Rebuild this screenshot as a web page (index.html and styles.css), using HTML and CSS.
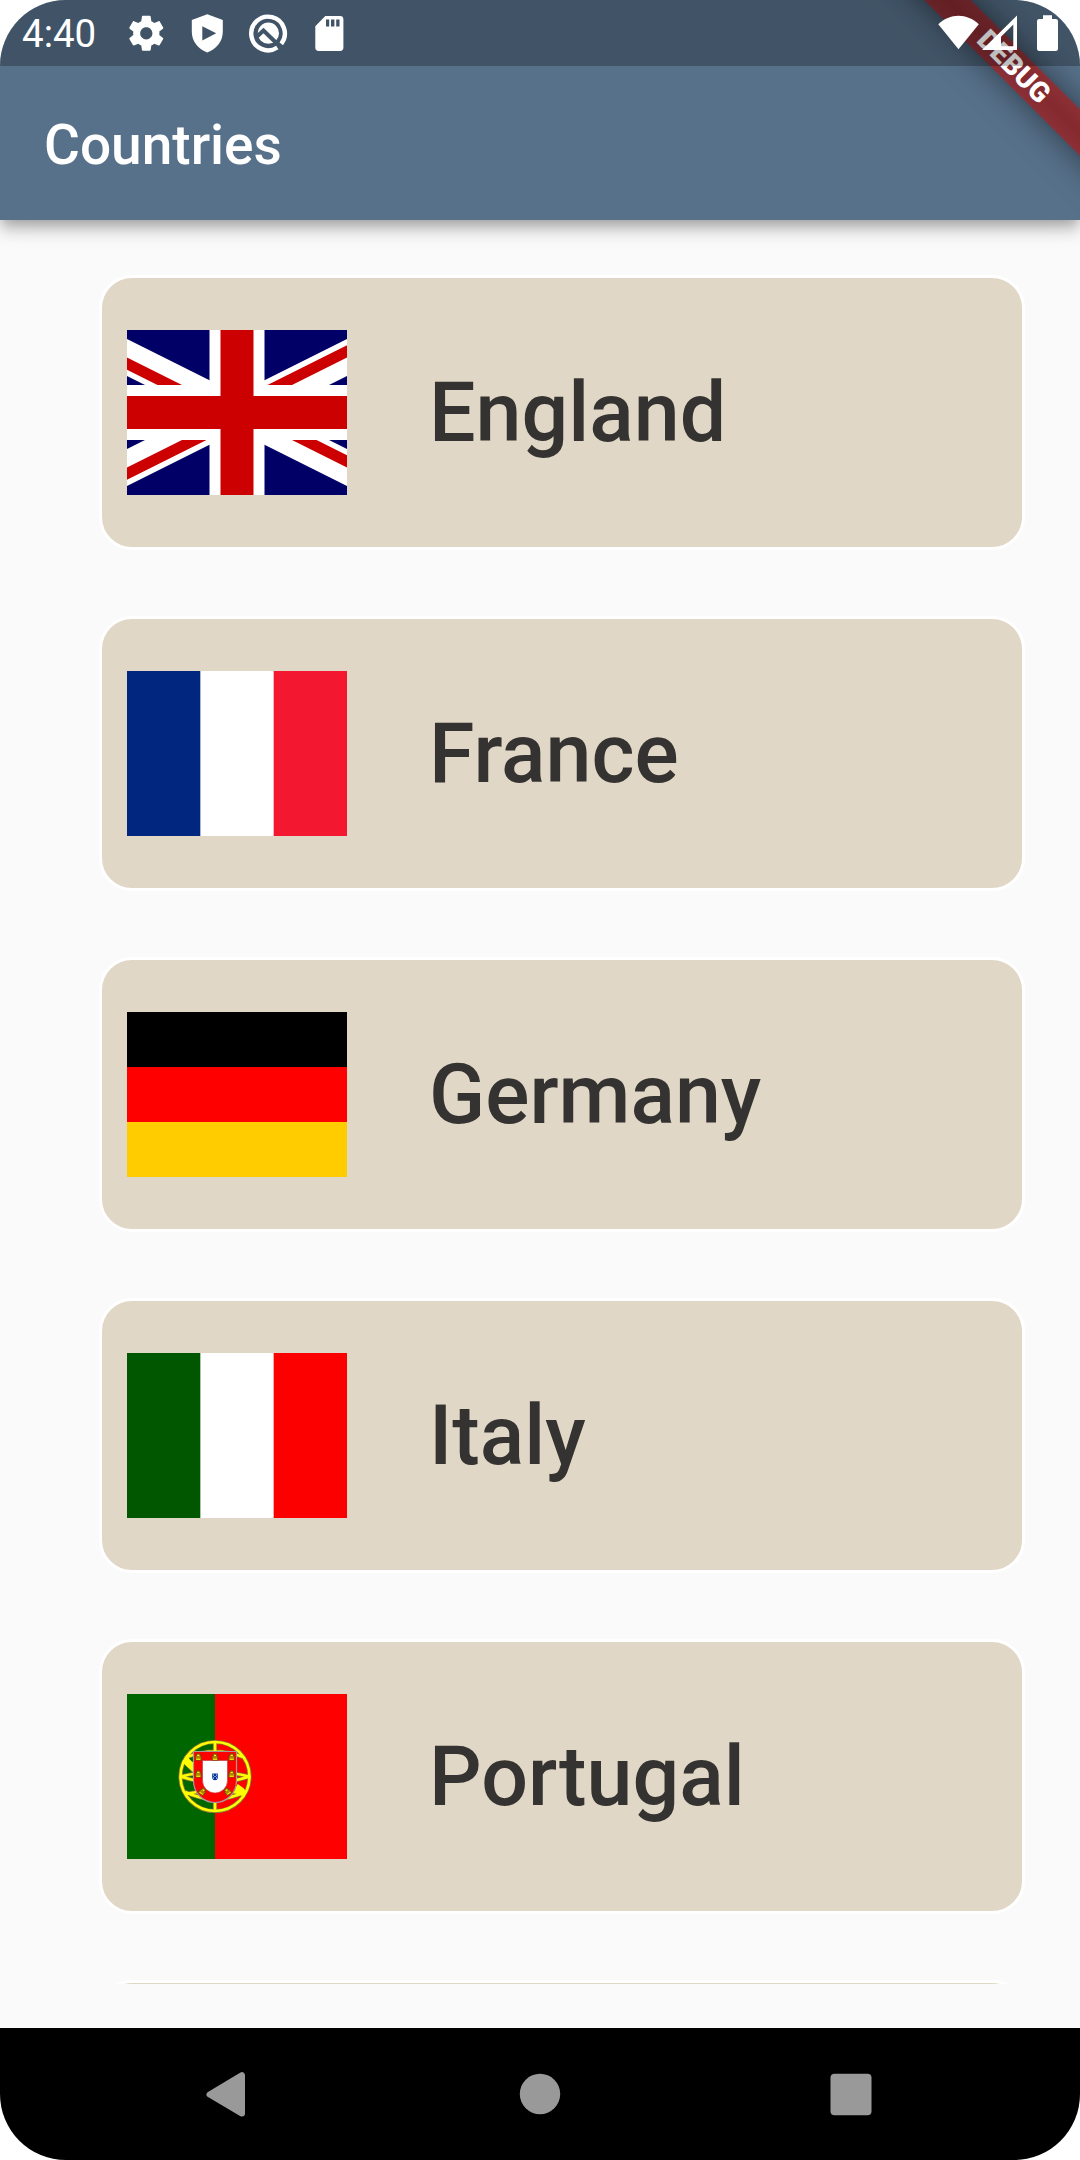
FILE: index.html
```html
<!DOCTYPE html>
<html lang="en">
<head>
<meta charset="utf-8">
<title>Countries</title>
<link rel="stylesheet" href="styles.css">
</head>
<body>
<div class="screen">
  <header class="header">
    <div class="status-bar">
      <span class="clock">4:40</span>
      <div class="status-icons">
        <svg class="notice" viewBox="116 0 61 66"><path transform="translate(125.3 12.3) scale(1.75)" d="M19.43 12.98c.04-.32.07-.64.07-.98s-.03-.66-.07-.98l2.11-1.65c.19-.15.24-.42.12-.64l-2-3.46c-.12-.22-.39-.3-.61-.22l-2.49 1c-.52-.4-1.08-.73-1.69-.98l-.38-2.65C14.46 2.18 14.25 2 14 2h-4c-.25 0-.46.18-.49.42l-.38 2.65c-.61.25-1.17.59-1.69.98l-2.49-1c-.23-.09-.49 0-.61.22l-2 3.46c-.13.22-.07.49.12.64l2.11 1.65c-.04.32-.07.65-.07.98s.03.66.07.98l-2.11 1.65c-.19.15-.24.42-.12.64l2 3.46c.12.22.39.3.61.22l2.49-1c.52.4 1.08.73 1.69.98l.38 2.65c.03.24.24.42.49.42h4c.25 0 .46-.18.49-.42l.38-2.65c.61-.25 1.17-.59 1.69-.98l2.49 1c.23.09.49 0 .61-.22l2-3.46c.12-.22.07-.49-.12-.64l-2.11-1.65zM12 15.5c-1.93 0-3.5-1.57-3.5-3.5s1.57-3.5 3.5-3.5 3.5 1.57 3.5 3.5-1.57 3.5-3.5 3.5z"/></svg>
        <svg class="notice" viewBox="177 0 61 66"><path fill-rule="evenodd" d="M207.3 14.2 191.8 20v11.8c0 9.8 6.6 17.6 15.5 20.6 8.9-3 15.5-10.8 15.5-20.6V20zM202.3 26.2 216.2 33.3 202.3 40.4z"/></svg>
        <svg class="notice" viewBox="238 0 61 66">
          <circle cx="268.4" cy="33.2" r="10.6"/>
          <path class="groove" d="M256.5 37 263.5 30.500 282 48.500"/>
          <path class="ring" d="M277.300 47.500A16.800 16.800 0 1 1 281.300 43.800"/>
        </svg>
        <svg class="notice" viewBox="299 0 61 66"><path fill-rule="evenodd" d="M325.3 16H340a3.4 3.4 0 0 1 3.4 3.4V47.5a3.4 3.4 0 0 1-3.4 3.4H318.700a3.4 3.4 0 0 1-3.4-3.4V26.200zM326 19.500v7h3.200v-7zM331 19.500v7h3.400v-7zM336.200 19.500v7h3.300v-7z"/></svg>
      </div>
      <svg class="system" viewBox="936 0 124 66">
        <path d="M938.3 24.3C950 12.8 967 12.8 978.8 24.3L958.5 49.3z"/>
        <path fill-rule="evenodd" d="M1017 15.5V50H982zM1013.3 24.5 1001 36.8V46.2h12.3z"/>
        <path d="M1043 15.3h9V19h3.8q2.200 0 2.200 2.200V48.700q0 2.200-2.200 2.200h-16.600q-2.200 0-2.200-2.200V21.200q0-2.200 2.200-2.200h3.800z"/>
      </svg>
    </div>
    <h1 class="title">Countries</h1>
    <div class="debug-banner">DEBUG</div>
  </header>

  <main class="list">
    <div class="card">
      <svg class="flag" viewBox="10 0 40 30">
        <path fill="#006" d="M0 0h60v30H0z"/>
        <path stroke="#fff" stroke-width="6" d="M0 0 60 30M60 0 0 30"/>
        <path fill="#c00" d="M0 0 30 15H25.53L0 2.24zM60 0 30 15H25.53L55.53 0zM0 30 30 15h4.47L4.47 30zM60 30 30 15h4.47L60 27.76z"/>
        <path stroke="#fff" stroke-width="10" d="M30 0v30M0 15h60"/>
        <path stroke="#c00" stroke-width="6" d="M30 0v30M0 15h60"/>
      </svg>
      <span class="name">England</span>
    </div>
    <div class="card">
      <svg class="flag" viewBox="0 0 3 3" preserveAspectRatio="none"><path fill="#fff" d="M0 0h3v3H0z"/><path fill="#00267f" d="M0 0h1v3H0z"/><path fill="#f31830" d="M2 0h1v3H2z"/></svg>
      <span class="name">France</span>
    </div>
    <div class="card">
      <svg class="flag" viewBox="0 0 3 3" preserveAspectRatio="none"><path d="M0 0h3v1H0z"/><path fill="#f00" d="M0 1h3v1H0z"/><path fill="#fc0" d="M0 2h3v1H0z"/></svg>
      <span class="name">Germany</span>
    </div>
    <div class="card">
      <svg class="flag" viewBox="0 0 3 3" preserveAspectRatio="none"><path fill="#fff" d="M0 0h3v3H0z"/><path fill="#005700" d="M0 0h1v3H0z"/><path fill="#fc0000" d="M2 0h1v3H2z"/></svg>
      <span class="name">Italy</span>
    </div>
    <div class="card">
      <svg class="flag" viewBox="0 0 220 165">
        <path fill="#f00" d="M0 0h220v165H0z"/>
        <path fill="#060" d="M0 0h88v165H0z"/>
        <g class="sphere-edge">
          <circle cx="88" cy="82.5" r="34.5"/>
          <path d="M88 48v69M53.5 82.5Q88 94 122.5 82.5M53.5 82.5Q88 74 122.5 82.5M60 63Q88 52 116 63M58.5 100Q88 93 117.5 100M58 98Q88 112 118 98M57 67Q84 98 117 99"/>
        </g>
        <g class="sphere">
          <circle cx="88" cy="82.5" r="34.5"/>
          <path d="M88 48v69M53.5 82.5Q88 94 122.5 82.5M53.5 82.5Q88 74 122.5 82.5M60 63Q88 52 116 63M58.5 100Q88 93 117.5 100M58 98Q88 112 118 98M57 67Q84 98 117 99"/>
          <path class="band" d="M58 65Q62 71 68 73M109 93Q114 96 117 100"/>
        </g>
        <path fill="#f00" stroke="#a99" stroke-width="1.2" d="M66.5 57.5h43v29.500a21.500 21.500 0 0 1-43 0z"/>
        <path fill="#fff" stroke="#b33" stroke-width=".6" d="M75.5 66.5h25v20a12.5 12.5 0 0 1-25 0z"/>
        <path fill="#039" d="M85.200 79.500h5.600v4a2.800 2.800 0 0 1-5.600 0z"/>
        <path fill="#fff" d="M87.500 82h1v1h-1zM86 80.500h1v1h-1zM89 80.500h1v1h-1zM86 83.500h1v1h-1zM89 83.500h1v1h-1z"/>
        <defs><g id="castle"><path fill="#a80" stroke="#640" stroke-width=".6" d="M-2.800 3.300v-4.300h1v-2.300h3.600v2.300h1v4.300z"/><path fill="#ff0" d="M-2 1.800h4v.9h-4zM-1 -2h2v1h-2z"/></g></defs>
        <use href="#castle" x="71.300" y="63"/><use href="#castle" x="88" y="63"/><use href="#castle" x="104.700" y="63"/>
        <use href="#castle" x="71.300" y="80"/><use href="#castle" x="104.700" y="80"/>
        <use href="#castle" transform="translate(75.500 97.500) rotate(38)"/><use href="#castle" transform="translate(100.500 97.500) rotate(-38)"/>
      </svg>
      <span class="name">Portugal</span>
    </div>
    <div class="card"></div>
  </main>

  <nav class="nav-bar">
    <svg class="nav-icon" viewBox="0 0 48 48"><path stroke-width="6" d="M5.500 24.500 38 5.200v38.400z"/></svg>
    <svg class="nav-icon" viewBox="0 0 48 48"><circle cx="24" cy="24" r="20.2"/></svg>
    <svg class="nav-icon" viewBox="0 0 48 48"><rect x="3.500" y="3.800" width="41" height="41.400" rx="4"/></svg>
  </nav>
</div>
</body>
</html>
```

FILE: styles.css
```css
* {
  box-sizing: border-box;
}

body {
  margin: 0;
  background: #fff;
  font-family: Roboto, sans-serif;
}

.screen {
  position: relative;
  display: flex;
  flex-direction: column;
  width: 1080px;
  height: 2160px;
  overflow: hidden;
  border-radius: 66px;
  background: #fafafa;
}

.header {
  position: relative;
  flex: none;
  height: 220px;
  background: #57718a;
  box-shadow: 0 5.5px 11px -2.75px rgba(0, 0, 0, .2), 0 11px 13.75px rgba(0, 0, 0, .14), 0 2.75px 27.5px rgba(0, 0, 0, .12);
  color: #fff;
}

.status-bar {
  position: relative;
  z-index: 2;
  display: flex;
  align-items: center;
  height: 66px;
  padding: 0 20px 0 22px;
  background: rgba(0, 0, 0, .25);
}

.clock {
  width: 94px;
  padding-top: 2px;
  font-size: 38.5px;
  line-height: 64px;
}

.status-icons {
  display: flex;
  flex: 1;
}

.status-bar svg {
  display: block;
  height: 66px;
  fill: #fff;
}

.notice {
  width: 61px;
}

.system {
  width: 124px;
}

.status-bar .ring {
  fill: none;
  stroke: #fff;
  stroke-width: 4.4;
}

.status-bar .groove {
  fill: none;
  stroke: #415568;
  stroke-width: 4;
}

.title {
  margin: 0;
  padding: 2px 44px 0;
  font-size: 55px;
  font-weight: 500;
  line-height: 154px;
}

.debug-banner {
  position: absolute;
  z-index: 1;
  top: 49.6px;
  left: 794px;
  width: 440px;
  height: 33px;
  background: linear-gradient(#8c3037, #84292e 50%, #8c3037);
  box-shadow: 0 0 33px rgba(0, 0, 0, .5);
  font-size: 28px;
  font-weight: 900;
  line-height: 33px;
  text-align: center;
  transform: rotate(45deg);
}

.list {
  display: flex;
  flex: none;
  flex-direction: column;
  gap: 66px;
  height: 1764px;
  padding: 55px 55px 0 99px;
  overflow: hidden;
}

.card {
  display: flex;
  flex: none;
  align-items: center;
  gap: 82px;
  height: 275px;
  padding: 0 25px;
  border: 3px solid #fff;
  border-radius: 33px;
  background: #e1d7c6;
}

.flag {
  flex: none;
  width: 220px;
  height: 165px;
}

.sphere,
.sphere-edge {
  fill: none;
  stroke: #ff0;
  stroke-width: 2.6;
}

.sphere-edge {
  stroke: #873;
  stroke-width: 4.2;
}

.sphere .band {
  stroke-width: 7;
}

.name {
  color: #353331;
  font-size: 82.5px;
  font-weight: 500;
  line-height: 97px;
}

.nav-bar {
  display: flex;
  align-items: center;
  justify-content: space-between;
  height: 132px;
  margin-top: auto;
  padding: 0 205px 0 204px;
  background: #000;
}

.nav-icon {
  width: 48px;
  height: 48px;
  fill: #999;
  stroke: #999;
  stroke-width: 0;
  stroke-linejoin: round;
}
```
